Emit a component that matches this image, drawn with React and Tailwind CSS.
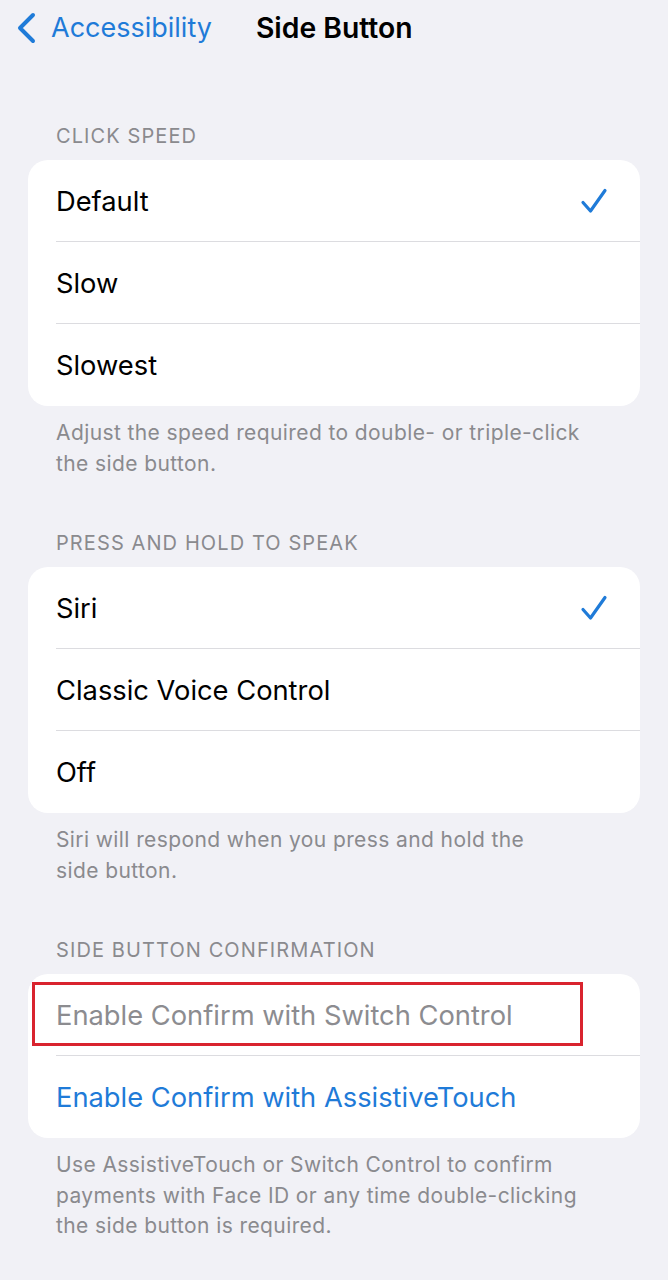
import React from "react";

const sections = [
  {
    title: "CLICK SPEED",
    rows: [
      { label: "Default", checked: true },
      { label: "Slow" },
      { label: "Slowest" },
    ],
    footer: ["Adjust the speed required to double- or triple-click", "the side button."],
  },
  {
    title: "PRESS AND HOLD TO SPEAK",
    rows: [
      { label: "Siri", checked: true },
      { label: "Classic Voice Control" },
      { label: "Off" },
    ],
    footer: ["Siri will respond when you press and hold the", "side button."],
  },
  {
    title: "SIDE BUTTON CONFIRMATION",
    rows: [
      { label: "Enable Confirm with Switch Control", tone: "muted", marked: true },
      { label: "Enable Confirm with AssistiveTouch", tone: "link" },
    ],
    footer: [
      "Use AssistiveTouch or Switch Control to confirm",
      "payments with Face ID or any time double-clicking",
      "the side button is required.",
    ],
  },
];

const Check = () => (
  <svg width="28" height="28" viewBox="0 0 28 28" fill="none">
    <path
      d="M3 15.5 L10.5 24 L25 3.5"
      stroke="#1f7bd8"
      strokeWidth="3.2"
      strokeLinecap="round"
      strokeLinejoin="round"
    />
  </svg>
);

const Row = ({ row, last }) => {
  const color =
    row.tone === "muted" ? "text-[#8c8c90]" : row.tone === "link" ? "text-[#1f7bd8]" : "text-black";
  return (
    <div className="relative pl-7">
      <div
        className={`flex h-[82px] items-center justify-between pr-[32px] ${
          last ? "" : "border-b border-[#dcdce0]"
        }`}
      >
        <span className={`pt-[3px] text-[27.3px] ${color}`}>{row.label}</span>
        {row.checked && <Check />}
      </div>
      {row.marked && (
        <div className="absolute left-[4px] top-[8px] h-[64px] w-[551px] border-[3.5px] border-[#d9232e]" />
      )}
    </div>
  );
};

export default function App() {
  return (
    <div
      className="min-h-[1280px] w-[668px] bg-[#f1f1f6] pb-10"
      style={{ fontFamily: "Inter, 'Noto Sans', sans-serif" }}
    >
      <div className="flex h-[56px] items-center">
        <div className="flex items-center pl-[14px]">
          <svg width="24" height="32" viewBox="0 0 24 32" fill="none">
            <path
              d="M19 3 L6 16 L19 29"
              stroke="#1f7bd8"
              strokeWidth="4"
              strokeLinecap="round"
              strokeLinejoin="round"
            />
          </svg>
          <span className="ml-[13px] text-[27px] text-[#1f7bd8]">Accessibility</span>
        </div>
        <span className="ml-[44px] text-[28.3px] font-semibold text-black">Side Button</span>
      </div>

      <div className="pt-[68px]">
        {sections.map((s, i) => (
          <div key={s.title} className={i === 0 ? "" : "mt-[52px]"}>
            <div className="px-[56px] pb-[12px] text-[20px] leading-[24px] tracking-[1.1px] text-[#8a8a8e]">
              {s.title}
            </div>
            <div className="mx-[28px] rounded-[20px] bg-white">
              {s.rows.map((r, j) => (
                <Row key={r.label} row={r} last={j === s.rows.length - 1} />
              ))}
            </div>
            <div className="px-[56px] pt-[12px] text-[21px] leading-[30.5px] tracking-[0.4px] text-[#8a8a8e]">
              {s.footer.map((l) => (
                <div key={l}>{l}</div>
              ))}
            </div>
          </div>
        ))}
      </div>
    </div>
  );
}
